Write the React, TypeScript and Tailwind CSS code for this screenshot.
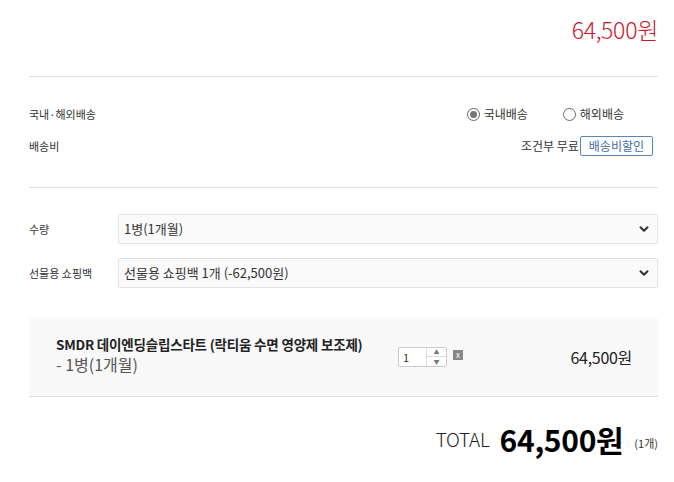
import { ChevronDown } from "lucide-react";

const font = { fontFamily: '"Noto Sans CJK KR", "Noto Sans", sans-serif' };

function Select({ value }: { value: string }) {
  return (
    <div className="flex h-[30px] flex-1 items-center justify-between rounded-[2px] border border-[#e3e3e3] bg-[#fafafa] pl-[5px] pr-[6px] text-[13px] text-[#333]">
      <span>{value}</span>
      <ChevronDown size={14} strokeWidth={3.5} className="text-[#333]" />
    </div>
  );
}

function Radio({ checked, label }: { checked?: boolean; label: string }) {
  return (
    <label className="flex items-center gap-[4px] text-[12px] text-[#333]">
      <span className="flex h-[13px] w-[13px] items-center justify-center rounded-full border border-[#666] bg-white">
        {checked && <span className="h-[7px] w-[7px] rounded-full bg-[#777]" />}
      </span>
      {label}
    </label>
  );
}

export default function App() {
  return (
    <div className="w-[674px] bg-white pl-[29px] pr-[16px]" style={font}>
      <div className="flex h-[77px] items-start justify-end border-b border-[#e0e0e0] pt-[14px]">
        <span className="text-[23px] font-light leading-[30px] tracking-[-0.3px] text-[#d2112b]">64,500원</span>
      </div>

      <div className="flex h-[111px] flex-col border-b border-[#e0e0e0] pt-[27px]">
        <div className="flex h-[20px] items-center justify-between text-[11px] text-[#333]">
          <span>국내·해외배송</span>
          <div className="mr-[34px] flex gap-[35px]">
            <Radio checked label="국내배송" />
            <Radio label="해외배송" />
          </div>
        </div>
        <div className="mt-[11px] flex h-[22px] items-center justify-between text-[11px] text-[#333]">
          <span>배송비</span>
          <div className="mr-[5px] flex items-center">
            <span className="text-[12px]">조건부 무료</span>
            <span className="ml-[1px] flex h-[20px] items-center rounded-[2px] border border-[#5b86c5] px-[8px] text-[12px] text-[#3f6aab]">
              배송비할인
            </span>
          </div>
        </div>
      </div>

      <div className="flex flex-col gap-[14px] pt-[26px]">
        <div className="flex items-center">
          <span className="w-[89px] text-[11px] text-[#333]">수량</span>
          <Select value="1병(1개월)" />
        </div>
        <div className="flex items-center">
          <span className="w-[89px] text-[11px] text-[#333]">선물용 쇼핑백</span>
          <Select value="선물용 쇼핑백 1개 (-62,500원)" />
        </div>
      </div>

      <div className="mt-[30px] flex h-[79px] items-center border-b border-[#e0e0e0] bg-[#f9f9f9] pl-[27px] pr-[26px]">
        <div className="mb-[3px] flex w-[342px] flex-col">
          <span className="text-[13.5px] font-bold leading-[18px] tracking-[-0.2px] text-[#222]">
            SMDR 데이엔딩슬립스타트 (락티움 수면 영양제 보조제)
          </span>
          <span className="text-[16px] leading-[23px] text-[#555]">- 1병(1개월)</span>
        </div>
        <div className="flex items-start gap-[6px] self-start pt-[29px]">
          <div className="flex h-[20px] w-[49px] rounded-[2px] border border-[#ccc] bg-white">
            <span className="flex-1 pl-[4px] text-[11px] leading-[18px] text-[#333]">1</span>
            <div className="flex w-[20px] flex-col border-l border-[#ddd]">
              <span className="flex h-[9px] items-center justify-center border-b border-[#ddd] text-[6px] leading-none text-[#777]">▲</span>
              <span className="flex flex-1 items-center justify-center text-[6px] leading-none text-[#777]">▼</span>
            </div>
          </div>
          <span className="mt-[3px] flex h-[10px] w-[10px] items-center justify-center bg-[#888] text-[8px] leading-none text-white">x</span>
        </div>
        <span className="ml-auto text-[16px] tracking-[-0.3px] text-[#222]">64,500원</span>
      </div>

      <div className="flex h-[86px] items-center justify-end pb-[2px]">
        <span className="text-[19px] font-light tracking-[-0.3px] text-[#222]">TOTAL</span>
        <span className="ml-[10px] text-[30px] font-bold tracking-[-0.3px] text-black">64,500원</span>
        <span className="ml-[11px] mt-[8px] text-[11px] text-[#333]">(1개)</span>
      </div>
    </div>
  );
}
